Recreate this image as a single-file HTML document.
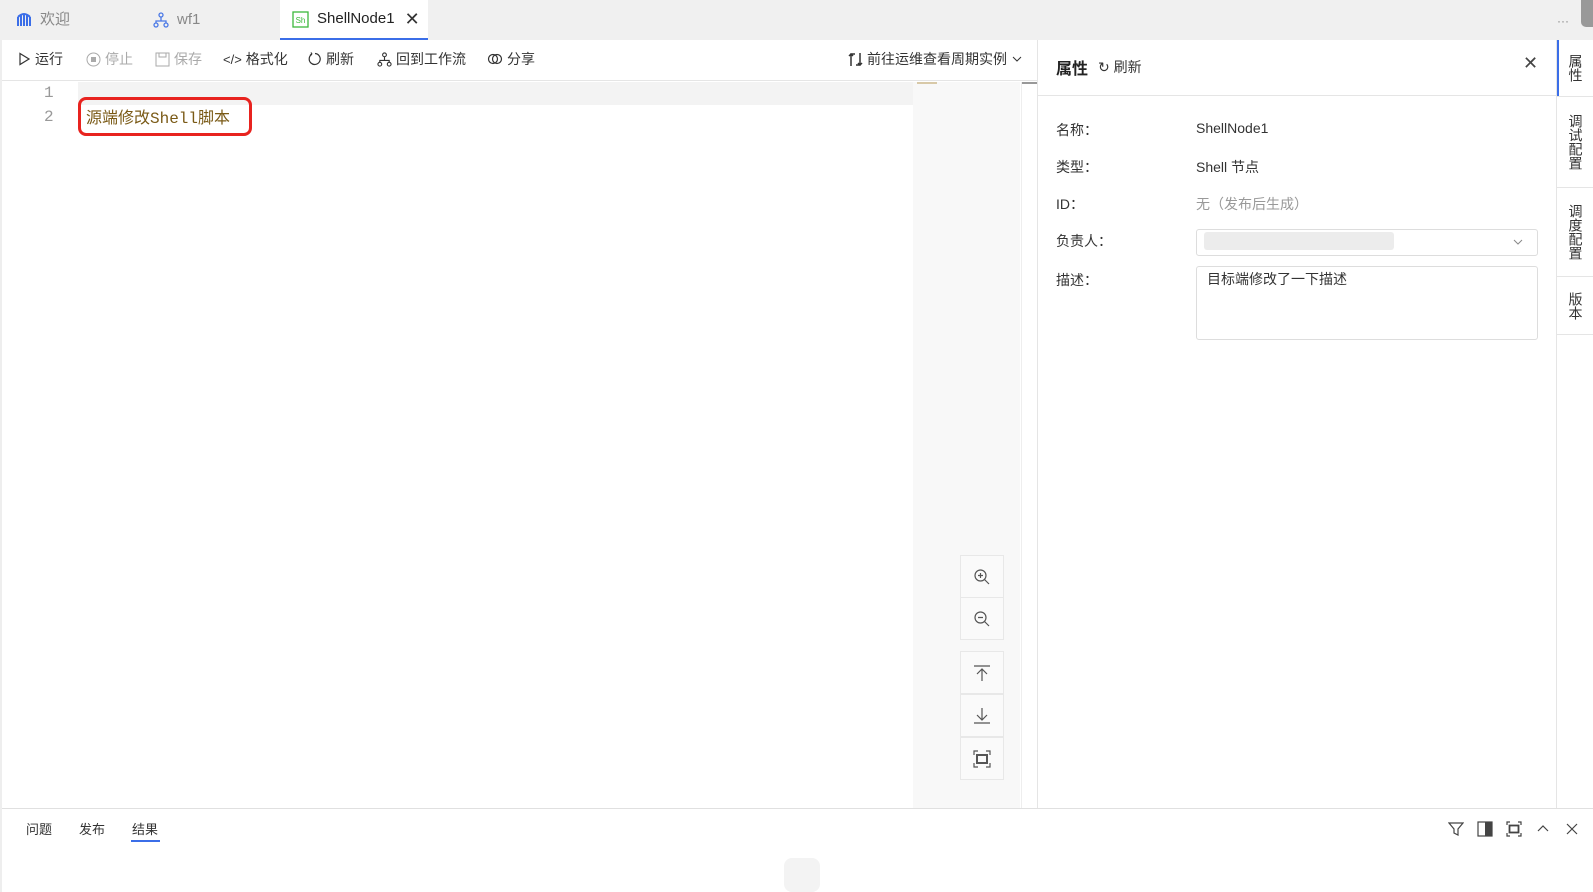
<!DOCTYPE html>
<html><head><meta charset="utf-8">
<style>
*{box-sizing:border-box;margin:0;padding:0}
body{width:1593px;height:892px;overflow:hidden;background:#fff;font-family:"Liberation Sans","Noto Sans CJK SC",sans-serif;font-size:14px;color:#333;position:relative}
.abs{position:absolute}
.tabbar{left:0;top:0;width:1593px;height:40px;background:#f0f0f0}
.tab{position:absolute;top:0;height:40px;line-height:38px;font-size:15px;color:#888;display:flex;align-items:center;gap:8px}
.tb{position:absolute;top:40px;left:0;width:1037px;height:41px;border-bottom:1px solid #e5e5e5;}
.tbi{position:absolute;top:9px;font-size:14px;color:#333;display:flex;align-items:center;gap:4px;white-space:nowrap}
.dis{color:#aaa}
svg{display:block}
.lbl{position:absolute;left:1056px;font-size:14px;color:#333}
.val{position:absolute;left:1196px;font-size:14px;color:#333}
.vt{position:absolute;left:1557px;width:36px;border-bottom:1px solid #e5e5e5;font-size:14px;color:#333;text-align:center;line-height:15px;writing-mode:vertical-rl;display:flex;align-items:center;justify-content:center}
.zb{position:absolute;left:960px;width:44px;height:43px;border:1px solid #e8e8e8;background:#fafafa;display:flex;align-items:center;justify-content:center}
</style></head><body>
<div class="abs tabbar"></div>
<div class="tab" style="left:16px"><svg width="16" height="16" viewBox="0 0 16 16"><path d="M2 14V5M5 14V3M8 14V2M11 14V3M14 14V5M2 5Q8-1 14 5" stroke="#3b6ee8" stroke-width="2" fill="none"/></svg><span>欢迎</span></div>
<div class="tab" style="left:153px"><svg width="16" height="16" viewBox="0 0 16 16" fill="none" stroke="#4a78e6" stroke-width="1.3"><circle cx="8" cy="3" r="2"/><circle cx="3" cy="13" r="2"/><circle cx="13" cy="13" r="2"/><path d="M8 5v4M3 11V9h10v2"/></svg><span>wf1</span></div>
<div class="tab" style="left:280px;width:148px;background:#fff;border-bottom:2px solid #3b6ee8;color:#222;padding-left:12px"><svg width="17" height="17" viewBox="0 0 17 17"><rect x="1" y="1" width="15" height="15" fill="none" stroke="#3db83d" stroke-width="1.3"/><text x="8.5" y="12" font-size="8" fill="#3db83d" text-anchor="middle" font-family="Liberation Sans">Sh</text></svg><span>ShellNode1</span><span style="font-size:18px;color:#333;margin-left:2px">✕</span></div>
<div class="abs" style="left:1557px;top:14px;color:#888;font-size:12px">···</div>
<div class="abs" style="left:1581px;top:0;width:12px;height:27px;background:#999;border-radius:0 0 0 5px"></div>

<div class="tb">
<div class="tbi" style="left:17px"><svg width="14" height="14" viewBox="0 0 14 14"><path d="M3 1.5L12 7 3 12.5Z" fill="none" stroke="#333" stroke-width="1.2"/></svg>运行</div>
<div class="tbi dis" style="left:86px"><svg width="15" height="15" viewBox="0 0 15 15"><circle cx="7.5" cy="7.5" r="6.5" fill="none" stroke="#aaa"/><rect x="5" y="5" width="5" height="5" fill="#aaa"/></svg>停止</div>
<div class="tbi dis" style="left:155px"><svg width="15" height="15" viewBox="0 0 15 15" fill="none" stroke="#aaa"><rect x="1" y="1" width="13" height="13"/><path d="M4 1v4h7V1"/></svg>保存</div>
<div class="tbi" style="left:223px"><span style="font-size:13px">&lt;/&gt;</span>格式化</div>
<div class="tbi" style="left:308px"><svg width="14" height="14" viewBox="0 0 14 14"><path d="M4 2.2A5.5 5.5 0 1 0 7 1.5M4 2.2L3 .5M4 2.2L2 3" fill="none" stroke="#333" stroke-width="1.2"/></svg>刷新</div>
<div class="tbi" style="left:377px"><svg width="15" height="15" viewBox="0 0 16 16" fill="none" stroke="#333" stroke-width="1.2"><circle cx="8" cy="3" r="2"/><circle cx="3" cy="13" r="2"/><circle cx="13" cy="13" r="2"/><path d="M8 5v4M3 11V9h10v2"/></svg>回到工作流</div>
<div class="tbi" style="left:487px"><svg width="16" height="14" viewBox="0 0 16 14" fill="none" stroke="#333" stroke-width="1.2"><circle cx="6" cy="7" r="4.5"/><circle cx="10" cy="7" r="4.5"/></svg>分享</div>
<div class="tbi" style="left:848px"><svg width="15" height="15" viewBox="0 0 15 15" fill="none" stroke="#333" stroke-width="1.5"><path d="M3 14V2h4M1 4l2-2 2 2M12 1v12H8M10 11l2 2 2-2"/></svg>前往运维查看周期实例<svg width="12" height="12" viewBox="0 0 12 12"><path d="M2 4l4 4 4-4" fill="none" stroke="#333"/></svg></div>
</div>

<!-- editor -->
<div class="abs" style="left:78px;top:82px;width:835px;height:23px;background:#f3f3f3"></div>
<div class="abs" style="left:913px;top:82px;width:107px;height:727px;background:#f8f8f8"></div>
<div class="abs" style="left:917px;top:82px;width:20px;height:2px;background:#d8c9a8"></div>
<div class="abs" style="left:1022px;top:82px;width:15px;height:2px;background:#999"></div>
<div class="abs" style="left:1021px;top:82px;width:1px;height:727px;background:#eee"></div>
<div class="abs" style="left:44px;top:81px;font-family:'Liberation Mono',monospace;font-size:16px;color:#999;line-height:24px">1<br>2</div>
<div class="abs" style="left:78px;top:97px;width:174px;height:39px;border:3px solid #e8231f;border-radius:8px"></div>
<div class="abs" style="left:86px;top:104px;font-family:'Liberation Mono','Noto Sans CJK SC',monospace;font-size:16px;color:#7a5a16">源端修改Shell脚本</div>

<div class="zb" style="top:555px"><svg width="18" height="18" viewBox="0 0 18 18" fill="none" stroke="#555" stroke-width="1.2"><circle cx="7.5" cy="7.5" r="5.5"/><path d="M11.5 11.5l4.5 4.5M5 7.5h5M7.5 5v5"/></svg></div>
<div class="zb" style="top:597px"><svg width="18" height="18" viewBox="0 0 18 18" fill="none" stroke="#555" stroke-width="1.2"><circle cx="7.5" cy="7.5" r="5.5"/><path d="M11.5 11.5l4.5 4.5M5 7.5h5"/></svg></div>
<div class="zb" style="top:651px"><svg width="18" height="18" viewBox="0 0 18 18" fill="none" stroke="#555" stroke-width="1.2"><path d="M1 2h16M9 5v12M4 10l5-5 5 5"/></svg></div>
<div class="zb" style="top:694px"><svg width="18" height="18" viewBox="0 0 18 18" fill="none" stroke="#555" stroke-width="1.2"><path d="M1 16h16M9 1v12M4 8l5 5 5-5"/></svg></div>
<div class="zb" style="top:737px"><svg width="18" height="18" viewBox="0 0 18 18" fill="none" stroke="#555" stroke-width="1.2"><path d="M1 5V1h4M13 1h4v4M17 13v4h-4M5 17H1v-4"/><rect x="4" y="5" width="10" height="8" stroke-width="2"/></svg></div>

<!-- right panel -->
<div class="abs" style="left:1037px;top:40px;width:1px;height:769px;background:#e5e5e5"></div>
<div class="abs" style="left:1038px;top:95px;width:519px;height:1px;background:#e5e5e5"></div>
<div class="abs" style="left:1056px;top:55px;font-size:16px;font-weight:bold;color:#222">属性</div>
<div class="abs" style="left:1098px;top:57px;font-size:14px;color:#333">↻ 刷新</div>
<div class="abs" style="left:1523px;top:53px;font-size:18px;color:#444">✕</div>
<div class="abs" style="left:1556px;top:40px;width:1px;height:769px;background:#e5e5e5"></div>
<div class="abs" style="left:1557px;top:40px;width:2px;height:57px;background:#3b6ee8"></div>
<div class="vt" style="top:40px;height:57px">属性</div>
<div class="vt" style="top:97px;height:91px">调试配置</div>
<div class="vt" style="top:188px;height:89px">调度配置</div>
<div class="vt" style="top:277px;height:58px">版本</div>

<div class="lbl" style="top:120px">名称：</div><div class="val" style="top:120px">ShellNode1</div>
<div class="lbl" style="top:157px">类型：</div><div class="val" style="top:157px">Shell 节点</div>
<div class="lbl" style="top:194px">ID：</div><div class="val" style="top:194px;color:#999">无（发布后生成）</div>
<div class="lbl" style="top:231px">负责人：</div>
<div class="abs" style="left:1196px;top:229px;width:342px;height:27px;border:1px solid #ddd;border-radius:3px"></div>
<div class="abs" style="left:1204px;top:232px;width:190px;height:18px;background:#ececec;border-radius:3px"></div>
<svg class="abs" style="left:1512px;top:236px" width="12" height="12" viewBox="0 0 12 12"><path d="M2 4l4 4 4-4" fill="none" stroke="#888"/></svg>
<div class="lbl" style="top:270px">描述：</div>
<div class="abs" style="left:1196px;top:266px;width:342px;height:74px;border:1px solid #ddd;border-radius:3px;padding:2px 10px;font-size:14px">目标端修改了一下描述</div>

<!-- bottom -->
<div class="abs" style="left:0;top:808px;width:1593px;height:1px;background:#e0e0e0"></div>
<div class="abs" style="left:0;top:40px;width:2px;height:852px;background:#eee"></div>
<div class="abs" style="left:26px;top:819px;font-size:13px">问题</div>
<div class="abs" style="left:79px;top:819px;font-size:13px">发布</div>
<div class="abs" style="left:132px;top:819px;font-size:13px">结果</div>
<div class="abs" style="left:131px;top:840px;width:29px;height:2px;background:#3b6ee8"></div>
<div class="abs" style="left:1448px;top:821px;display:flex;gap:13px;align-items:center">
<svg width="16" height="16" viewBox="0 0 16 16"><path d="M1 2h14L10 8v6l-4-2V8Z" fill="none" stroke="#444" stroke-width="1.2"/></svg>
<svg width="16" height="16" viewBox="0 0 16 16"><rect x="1" y="1" width="14" height="14" fill="none" stroke="#444" stroke-width="1.2"/><rect x="8" y="1" width="7" height="14" fill="#444"/></svg>
<svg width="16" height="16" viewBox="0 0 16 16" fill="none" stroke="#444" stroke-width="1.2"><path d="M1 4V1h3M12 1h3v3M15 12v3h-3M4 15H1v-3"/><rect x="3.5" y="4.5" width="9" height="7" stroke-width="1.8"/></svg>
<svg width="16" height="16" viewBox="0 0 16 16"><path d="M3 10l5-5 5 5" fill="none" stroke="#444" stroke-width="1.2"/></svg>
<svg width="16" height="16" viewBox="0 0 16 16"><path d="M3 3l10 10M13 3L3 13" stroke="#444" stroke-width="1.2"/></svg>
</div>
<div class="abs" style="left:784px;top:858px;width:36px;height:34px;background:#f3f3f3;border-radius:8px"></div>
</body></html>
